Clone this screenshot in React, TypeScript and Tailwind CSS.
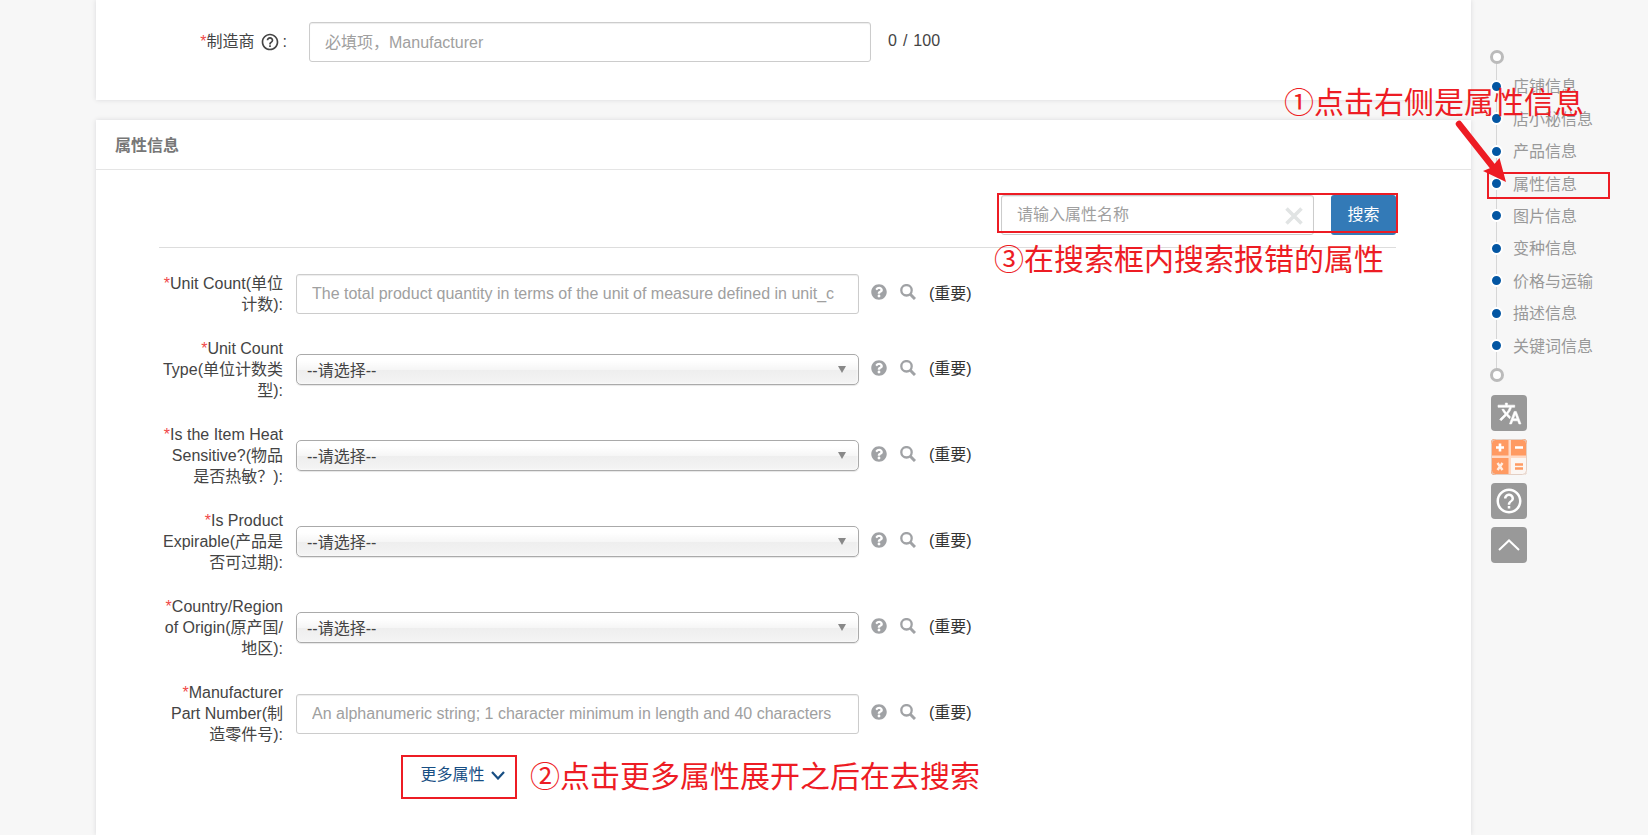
import { useState } from "react";
import { MdHelpOutline } from "react-icons/md";
import { FaQuestionCircle } from "react-icons/fa";

type Field = {
  id: string;
  label: string;
  kind: "text" | "select";
  placeholder?: string;
};

const FIELDS: Field[] = [
  {
    id: "unit-count",
    label: "Unit Count(单位计数):",
    kind: "text",
    placeholder: "The total product quantity in terms of the unit of measure defined in unit_c",
  },
  { id: "unit-count-type", label: "Unit Count Type(单位计数类型):", kind: "select" },
  { id: "heat-sensitive", label: "Is the Item Heat Sensitive?(物品是否热敏？):", kind: "select" },
  { id: "expirable", label: "Is Product Expirable(产品是否可过期):", kind: "select" },
  { id: "origin", label: "Country/Region of Origin(原产国/地区):", kind: "select" },
  {
    id: "part-number",
    label: "Manufacturer Part Number(制造零件号):",
    kind: "text",
    placeholder: "An alphanumeric string; 1 character minimum in length and 40 characters",
  },
];

const SECTIONS = [
  { id: "shop", label: "店铺信息" },
  { id: "dxm", label: "店小秘信息" },
  { id: "product", label: "产品信息" },
  { id: "attributes", label: "属性信息", marked: true },
  { id: "images", label: "图片信息" },
  { id: "variants", label: "变种信息" },
  { id: "shipping", label: "价格与运输" },
  { id: "description", label: "描述信息" },
  { id: "keywords", label: "关键词信息" },
];

const INPUT =
  "h-10 rounded-[3px] border border-[#ccc] bg-white pl-[15px] pr-3 text-base text-[#444] shadow-[inset_0_1px_1px_rgba(0,0,0,0.075)] outline-none placeholder:text-[#a0a0a0]";
const NOTE =
  "pointer-events-none absolute z-10 whitespace-nowrap text-[30px] leading-10 text-[#ed1c24]";
const MARK = "pointer-events-none absolute z-10 border-2 border-[#ed1c24]";
const TOOL =
  "flex size-9 items-center justify-center overflow-hidden rounded-[4px] bg-[#999] text-white";

function SearchIcon() {
  return (
    <svg viewBox="0 0 16 16" className="size-4" fill="none" stroke="currentColor">
      <circle cx="6.5" cy="6.3" r="5.2" strokeWidth="2.3" />
      <path d="M10 10l5 5" strokeWidth="3" />
    </svg>
  );
}

function TranslateIcon() {
  return (
    <svg viewBox="0 0 24 24" className="size-[25px]" fill="currentColor" stroke="currentColor" strokeWidth="0.6">
      <path d="M12.87 15.07l-2.54-2.51.03-.03A17.52 17.52 0 0 0 14.07 6H17V4h-7V2H8v2H1v1.99h11.17C11.5 7.92 10.44 9.75 9 11.35 8.07 10.32 7.3 9.19 6.69 8h-2c.73 1.63 1.73 3.17 2.98 4.56l-5.09 5.02L4 19l5-5 3.11 3.11.76-2.04z" />
      <path d="M18.5 10h-2L12 22h2l1.12-3h4.75L21 22h2l-4.5-12zm-2.62 7l1.62-4.33L19.12 17h-3.24z" />
    </svg>
  );
}

function CalculatorIcon() {
  return (
    <svg viewBox="0 0 36 36" className="size-9">
      <rect width="36" height="36" fill="#ffd9c4" />
      <path d="M0 0h17.5v16.5H0z" fill="#ff9a62" />
      <path d="M20 0h16v16.5H20z" fill="#ff9a62" />
      <path d="M0 19h17.5v17H0z" fill="#ff9a62" />
      <path d="M20 19h16v17H20z" fill="#fbf6f3" />
      <rect x="0.5" y="0.5" width="35" height="35" rx="4" fill="none" stroke="#e3cfc4" />
      <path d="M5 8.5h8M9 4.5v8M24 8.500h8" stroke="#fff" strokeWidth="2.6" />
      <path d="M6.500 24l5 7M11.500 24l-5 7" stroke="#ffeee4" strokeWidth="2.4" />
      <path d="M24 25.5h8M24 29.5h8" stroke="#ff9a62" strokeWidth="2.600" />
    </svg>
  );
}

function AttributeRow({ field }: { field: Field }) {
  return (
    <div className="flex items-center">
      <label htmlFor={field.id} className="w-[124px] shrink-0 text-right leading-[21px]">
        <span className="text-[#f04848]">*</span>
        {field.label}
      </label>
      <div className="relative ml-[13px] w-[563px]">
        {field.kind === "text" ? (
          <input
            id={field.id}
            type="text"
            placeholder={field.placeholder}
            className={INPUT + " block w-full"}
          />
        ) : (
          <>
            <select
              id={field.id}
              className="block h-[31px] w-full appearance-none rounded-[5px] border border-[#aaa] bg-[linear-gradient(#fff_20%,#f6f6f6_50%,#eee_52%,#f4f4f4_100%)] pl-[10px] pr-8 pt-[3px] text-base text-[#444] shadow-[inset_0_0_3px_#fff,0_1px_1px_rgba(0,0,0,0.1)] outline-none"
            >
              <option>--请选择--</option>
            </select>
            <svg
              viewBox="0 0 8 7"
              className="pointer-events-none absolute right-[13px] top-3 h-[7px] w-2 text-[#888]"
            >
              <path d="M0 0h8L4 7z" fill="currentColor" />
            </svg>
          </>
        )}
      </div>
      <div className="ml-3 flex items-center gap-[13px] pb-1 text-[#a0a2a5]">
        <button type="button" aria-label="属性说明">
          <FaQuestionCircle className="size-4" />
        </button>
        <button type="button" aria-label="搜索属性值">
          <SearchIcon />
        </button>
        <span className="pt-[3px] text-[#333]">(重要)</span>
      </div>
    </div>
  );
}

function SideNav() {
  return (
    <aside className="relative w-[177px] shrink-0 pl-[19px] pt-[50px]">
      <nav className="relative flex flex-col gap-[6px]">
        <span className="absolute bottom-3 left-[6px] top-3 w-px bg-[#d6d6d6]" />
        <span className="relative size-[14px] rounded-full border-[3px] border-[#bbb] bg-white" />
        <ul className="flex h-[292px] flex-col">
          {SECTIONS.map((s) => (
            <li key={s.id} className="relative flex flex-1 items-center">
              {s.marked && <span className={MARK + " -left-[3px] top-[5px] h-[27px] w-[123px]"} />}
              <a href={"#" + s.id} className="flex items-center gap-[10px] text-[#999]">
                <span className="size-[13px] rounded-full border-2 border-white bg-[#0356a3]" />
                <span className="pt-[2px]">{s.label}</span>
              </a>
            </li>
          ))}
        </ul>
        <span className="relative size-[14px] rounded-full border-[3px] border-[#bbb] bg-white" />
      </nav>

      <div className="ml-px mt-[13px] flex flex-col gap-2">
        <button type="button" aria-label="翻译" className={TOOL}>
          <TranslateIcon />
        </button>
        <button type="button" aria-label="计算器" className={TOOL}>
          <CalculatorIcon />
        </button>
        <button type="button" aria-label="帮助" className={TOOL}>
          <MdHelpOutline className="size-[30px]" />
        </button>
        <button type="button" aria-label="返回顶部" className={TOOL}>
          <svg viewBox="0 0 22 12" className="h-3 w-[22px]" fill="none">
            <path d="M1 11L11 1.5 21 11" stroke="currentColor" strokeWidth="2" />
          </svg>
        </button>
      </div>

      {/* Step 1 note, runs over the card edge */}
      <p className={NOTE + " right-16 top-[83px]"}>①点击右侧是属性信息</p>
      <svg
        viewBox="0 0 54 66"
        className="pointer-events-none absolute -left-4 top-[118px] z-20 h-[66px] w-[54px] text-[#ed1c24]"
      >
        <path d="M4 6L38 49" stroke="currentColor" strokeWidth="6.5" strokeLinecap="round" />
        <path d="M28 53L36.5 49.5 44.5 40 51 64z" fill="currentColor" />
      </svg>
    </aside>
  );
}

export default function App() {
  const [manufacturer, setManufacturer] = useState("");
  const [keyword, setKeyword] = useState("");

  return (
    <div className="flex min-h-screen overflow-hidden bg-[#f7f7f7] font-['Liberation_Sans','Noto_Sans_CJK_SC',sans-serif] text-base text-[#444]">
      <main className="ml-24 flex min-w-0 flex-1 flex-col gap-5">
        <section className="flex items-center bg-white pb-[38px] pt-[22px] shadow-[0_0_5px_rgba(0,0,30,0.12)]">
          <label
            htmlFor="manufacturer"
            className="flex w-[191px] shrink-0 items-center justify-end"
          >
            <span className="text-[#f04848]">*</span>
            制造商
            <MdHelpOutline className="ml-[5px] size-5" />
            <span className="ml-[3px]">:</span>
          </label>
          <input
            id="manufacturer"
            type="text"
            value={manufacturer}
            maxLength={100}
            onChange={(e) => setManufacturer(e.target.value)}
            placeholder="必填项，Manufacturer"
            className={INPUT + " ml-[22px] w-[562px] pt-[2px]"}
          />
          <p className="ml-[17px] flex gap-[6px] pb-[2px]">
            <span>{manufacturer.length}</span>
            <span>/</span>
            <span>100</span>
          </p>
        </section>

        <section
          id="attributes"
          className="flex-1 bg-white shadow-[0_0_5px_rgba(0,0,30,0.12)]"
        >
          <h2 className="flex h-[50px] items-center border-b border-[#e5e5e5] px-[19px] pt-[3px] font-bold text-[#777]">
            属性信息
          </h2>

          <div className="pl-[63px] pr-[75px] pt-[25px]">
            <div className="relative flex justify-end gap-[17px] border-b border-[#ddd] pb-3">
              <div className="relative">
                <input
                  type="text"
                  aria-label="属性名称"
                  value={keyword}
                  onChange={(e) => setKeyword(e.target.value)}
                  placeholder="请输入属性名称"
                  className={INPUT + " w-[313px]"}
                />
                <button
                  type="button"
                  aria-label="清空"
                  onClick={() => setKeyword("")}
                  className="absolute right-[11px] top-3 text-[#e1e4e4]"
                >
                  <svg viewBox="0 0 18 18" className="size-[18px]">
                    <path d="M1.5 1.5l15 15M16.5 1.5l-15 15" stroke="currentColor" strokeWidth="3.6" />
                  </svg>
                </button>
              </div>
              <button type="button" className="h-10 w-[65px] rounded-[3px] bg-[#337ab7] text-white">
                搜索
              </button>
              <span className={MARK + " -right-[2px] -top-[2px] h-10 w-[401px]"} />
              <p className={NOTE + " right-3 top-[45px]"}>③在搜索框内搜索报错的属性</p>
            </div>

            <form className="mt-[25px] flex flex-col gap-[23px]">
              {FIELDS.map((field) => (
                <AttributeRow key={field.id} field={field} />
              ))}
            </form>

            <div className="ml-[242px] mt-[10px] flex">
              <div className="relative flex h-11 w-[116px] items-start justify-center pl-[7px] pt-2">
                <button type="button" className="flex items-center gap-[6px] text-[#174e83]">
                  更多属性
                  <svg viewBox="0 0 14 9" className="h-[9px] w-[14px]" fill="none">
                    <path d="M1 1l6 6.5L13 1" stroke="currentColor" strokeWidth="2.2" />
                  </svg>
                </button>
                <span className={MARK + " inset-0"} />
                <p className={NOTE + " left-[129px] top-[2px]"}>②点击更多属性展开之后在去搜索</p>
              </div>
            </div>
          </div>
        </section>
      </main>
      <SideNav />
    </div>
  );
}
